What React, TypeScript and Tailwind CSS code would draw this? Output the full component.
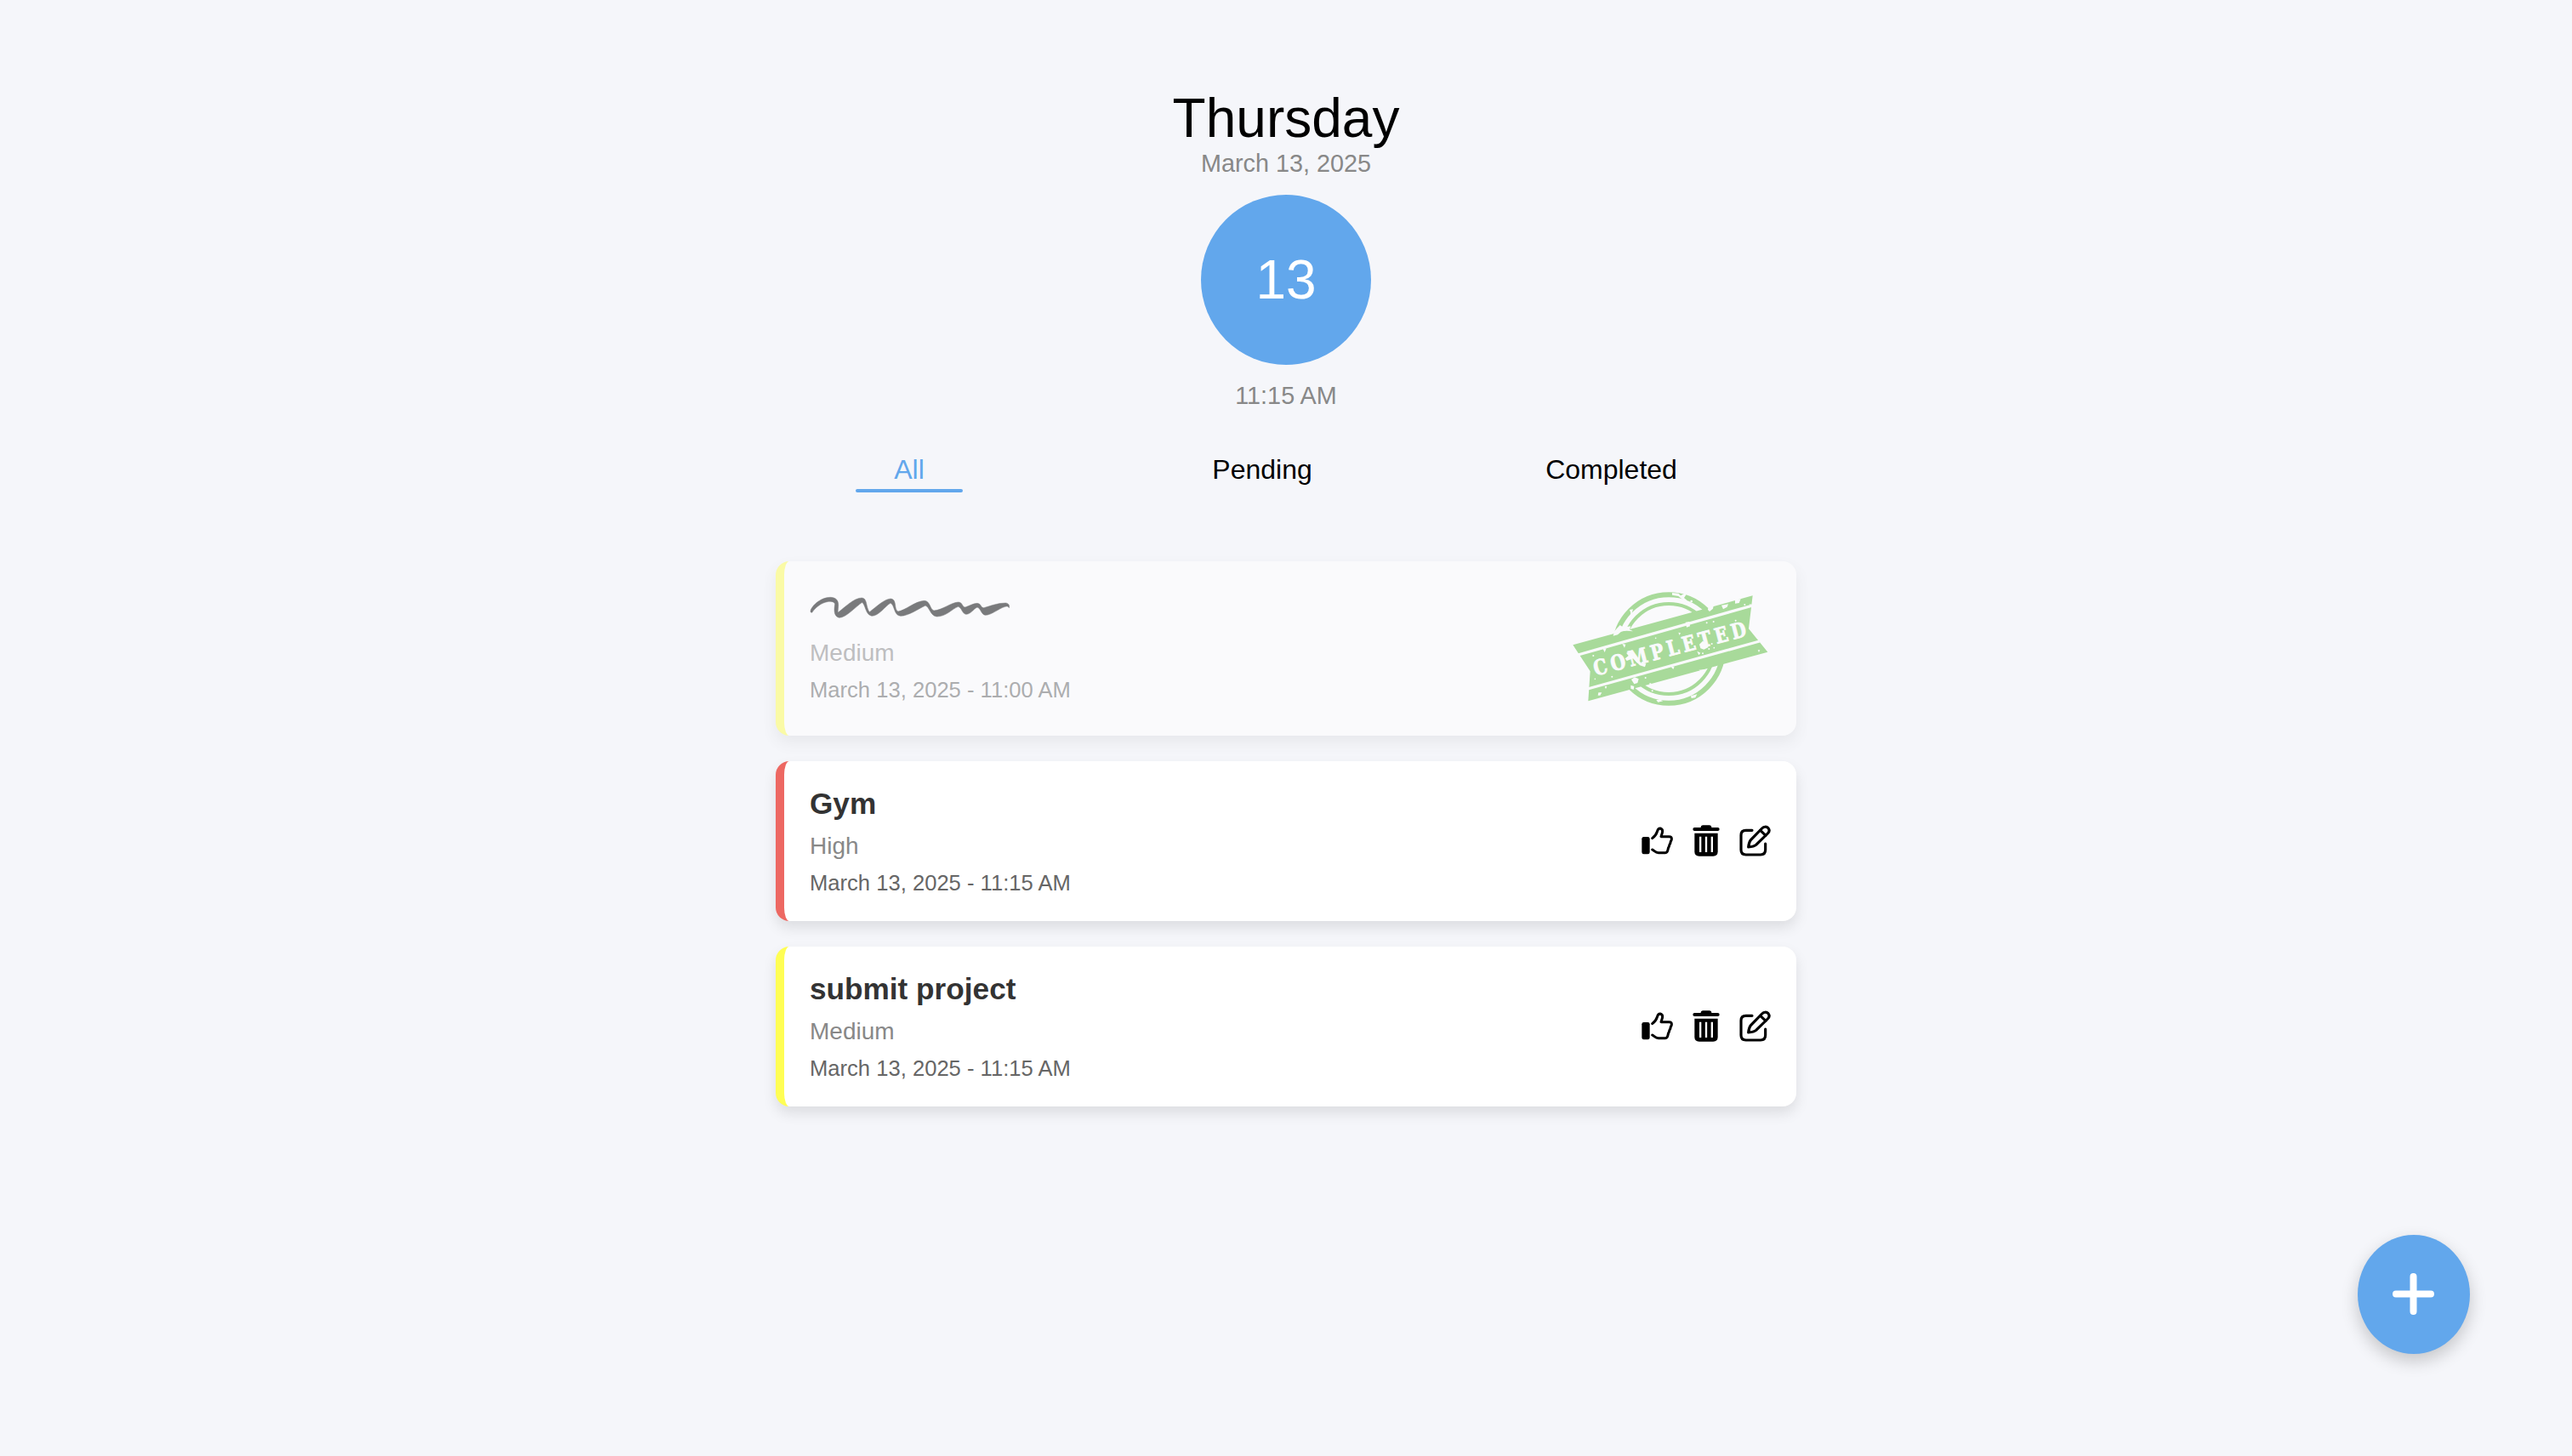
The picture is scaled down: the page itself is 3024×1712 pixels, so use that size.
import type { ReactNode } from "react";

function Scribble() {
  return (
    <svg className="block h-[26px] w-[236px]" viewBox="159 152 708 78" fill="#000" stroke="#000" strokeWidth="1.5" strokeLinejoin="round">
      <path d="M162 208C160 192 195 156 232 156C252 156 261 168 260 186L258 210C285 190 315 158 343 158C363 159 356 190 370 208C395 188 425 161 445 161C468 163 455 200 471 206C495 203 530 170 563 168C585 169 582 198 597 203C630 200 655 175 683 173C700 174 695 190 708 191C722 186 738 177 750 177C766 179 760 192 773 193C800 186 820 176 850 176C860 177 865 184 862 193C859 187 855 187 848 189C825 196 800 219 778 219C763 216 763 195 750 191C735 198 727 216 710 216C695 212 696 192 682 189C660 198 640 224 607 224C583 220 582 190 567 185C540 198 508 221 480 222C455 220 460 185 444 176C425 188 402 222 378 222C355 216 357 185 344 174C320 190 287 228 263 228C241 222 246 195 248 179C243 168 225 169 207 176C185 186 174 200 167 210Z" />
    </svg>
  );
}

function CompletedStamp() {
  return (
    <svg className="block h-[136px] w-[232px]" viewBox="54 72 696 408" fontFamily="'DejaVu Serif', serif">
      <g fill="none" stroke="#5dc03c">
        <circle cx="396" cy="276" r="191" strokeWidth="18" />
        <circle cx="396" cy="276" r="159" strokeWidth="12" />
      </g>
      <path d="M58 262L692 88L678 205L745 287L112 460L119 355Z" fill="#5dc03c" />
      <g stroke="#fff" strokeWidth="10" fill="none">
        <path d="M76 297L692 123" />
        <path d="M110 417L716 249" />
      </g>
      <text
        transform="translate(138 371) rotate(-14.8) scale(0.82 1)"
        fontSize="74"
        fontWeight="700"
        fill="#fff"
        stroke="#fff"
        strokeWidth="2.5"
        textLength="676"
        lengthAdjust="spacing"
      >
        COMPLETED
      </text>
      <g fill="#fff">
        <path d="M408 78l22 2 8 8 14-8 6 4-8 12 10 8-4 4-14-8-12-10-22-4zM536 122l18 2-2 10-12 10-6-6zM582 122l24-4-4 10-14 8zM630 102l20-2-6 14-14 2zM258 138l12-2-4 14 8 8-16 4 4-12zM204 214l20-22 12 8 4-18 8 16 14-2-4 12 12 6-22-2-18 2-14 12-16 4zM455 182l14-2 2 16-12 4zM232 258l12 2-4 12zM164 276l12-2-6 14zM430 218l8 2-4 8z" />
        <path d="M246 290l14-2 20 20 20 18 16 2-4 12-18-6-24-24-22 8-6-8 12-10zM504 260l12-12 12 8 8 14-16 8-12-4zM496 284l12 6-6 8zM264 384l12-8 14 6-4 14-12 4zM404 340l12-2-4 10zM326 398l8-2-2 8zM148 430l12 0-6 10-8 0zM170 408l8 0-4 10zM502 350l26-2-8 14-8-6zM474 442l22-6-6 12-14 2zM352 456l10 0-2-10 8 10 8 4-18 4zM680 118l12 2-4 10zM710 280l8 0-4 8zM262 404l12 4-2 12-10-4z" />
        <circle cx="548" cy="258" r="3" />
        <circle cx="538" cy="276" r="3" />
        <circle cx="556" cy="272" r="2.5" />
        <circle cx="516" cy="292" r="3" />
        <circle cx="530" cy="184" r="3" />
        <circle cx="554" cy="180" r="3" />
        <circle cx="632" cy="176" r="3" />
        <circle cx="664" cy="120" r="3" />
        <circle cx="136" cy="382" r="2.5" />
        <circle cx="196" cy="374" r="3" />
        <circle cx="314" cy="378" r="3" />
        <circle cx="338" cy="424" r="3" />
        <circle cx="476" cy="108" r="4" />
        <circle cx="290" cy="136" r="3" />
        <circle cx="130" cy="300" r="3" />
        <circle cx="350" cy="238" r="2.5" />
      </g>
    </svg>
  );
}

function ThumbIcon() {
  return (
    <svg className="block h-[37px] w-[37px]" viewBox="90 90 111 111" fill="none" stroke="#000" strokeWidth="9" strokeLinecap="round" strokeLinejoin="round">
      <rect x="91" y="132" width="28" height="61" rx="7" fill="#000" stroke="none" />
      <path d="M128 137C137 130 142 124 145 114C147 105 150 102 156 102C163 104 165 111 163 118L159 131H187C194 131 197 135 196 141C195 147 192 148 192 152C192 156 189 158 188 162C188 167 185 168 184 173C183 179 182 188 174 188H150C140 188 136 182 128 177" />
    </svg>
  );
}

function TrashIcon() {
  return (
    <svg className="block h-[37px] w-[32px]" viewBox="271 90 96 111" fill="#000">
      <path d="M278 99H300Q300 91 308 91H330Q338 91 338 99H360Q366 99 366 105Q366 111 360 111H278Q272 111 272 105Q272 99 278 99Z" />
      <path d="M278 119H360V184Q360 200 344 200H294Q278 200 278 184Z" />
      <path d="M298.500 131V186M319 131V186M339.500 131V186" stroke="#fff" strokeWidth="7" />
    </svg>
  );
}

function EditIcon() {
  return (
    <svg className="block h-[37px] w-[37px]" viewBox="437 90 111 111" fill="none" stroke="#000" strokeWidth="9.5" strokeLinecap="round" strokeLinejoin="round">
      <path d="M482 109H460Q443 109 443 126V178Q443 195 460 195H512Q529 195 529 178V156" />
      <path d="M469 168C470 158 472 149 478 142L517 102C524 95 533 95 539 101C544 107 543 114 537 120L496 160C489 166 479 167 469 168Z" />
      <path d="M511 109L530 127" />
    </svg>
  );
}

function Card({ title, priority, date, done, border }: {
  title: ReactNode; priority: string; date: string; done?: boolean; border: string;
}) {
  return (
    <article
      className={`flex items-center justify-between rounded-2xl border-l-[10px] bg-white pl-[30px] shadow-[0_8px_16px_rgba(0,0,0,0.1)] ${border} ${done ? "h-[205px] pr-8 opacity-50" : "h-[188px] pr-[30px]"}`}
    >
      <div className="self-start pt-[30px]">
        {title}
        <p className="mt-[14px] text-[28px] leading-8 text-[#888]">{priority}</p>
        <p className="mt-[13px] text-[25.6px] leading-7 text-[#666]">{date}</p>
      </div>
      {done ? (
        <CompletedStamp />
      ) : (
        <div className="flex items-center gap-[23px] pb-0.5">
          <button aria-label="Complete"><ThumbIcon /></button>
          <button aria-label="Delete"><TrashIcon /></button>
          <button aria-label="Edit"><EditIcon /></button>
        </div>
      )}
    </article>
  );
}

export default function App() {
  return (
    <div className="flex h-[1712px] w-full flex-col items-center bg-[#f5f6fa] font-['Liberation_Sans',Arial,sans-serif] text-black">
      <header className="flex flex-col items-center pt-[102px]">
        <h1 className="text-[64px] leading-[74px]">Thursday</h1>
        <p className="text-[28.8px] leading-8 text-[#888]">March 13, 2025</p>
        <div className="mt-[21px] flex h-[200px] w-[200px] items-center justify-center rounded-full bg-[#62a7ec] text-[64px] leading-[74px] text-white">
          13
        </div>
        <p className="mt-5 text-[28.8px] leading-8 text-[#888]">11:15 AM</p>
      </header>

      <nav className="mt-[53px] flex h-[45px] w-[1200px] items-start pl-[94px] text-[32px] leading-9">
        <button className="w-[126px] text-[#62a7ec]">
          <span className="flex h-[41px] items-start justify-center">All</span>
          <span className="block h-1 rounded-sm bg-[#62a7ec]" />
        </button>
        <button className="ml-[248px] w-[208px]">Pending</button>
        <button className="ml-[184px] w-[245px]">Completed</button>
      </nav>

      <main className="mt-[81px] flex w-[1200px] flex-col gap-[30px]">
        <Card
          title={<div className="h-12 pt-[11px]"><Scribble /></div>}
          priority="Medium"
          date="March 13, 2025 - 11:00 AM"
          border="border-[#fffe54]"
          done
        />
        <Card
          title={<h2 className="text-[35.2px] leading-10 font-bold text-[#333]">Gym</h2>}
          priority="High"
          date="March 13, 2025 - 11:15 AM"
          border="border-[#ed6862]"
        />
        <Card
          title={<h2 className="text-[35.2px] leading-10 font-bold text-[#333]">submit project</h2>}
          priority="Medium"
          date="March 13, 2025 - 11:15 AM"
          border="border-[#fffe54]"
        />
      </main>

      <button
        aria-label="Add task"
        className="fixed right-[120px] bottom-[120px] flex h-[140px] w-[132px] items-center justify-center rounded-[50%] bg-[#62a7ec] pr-px pb-px shadow-[0_8px_20px_rgba(0,0,0,0.2)]"
      >
        <svg className="h-[49px] w-[49px]" viewBox="0 0 49 49" fill="none" stroke="#fff" strokeWidth="8" strokeLinecap="round">
          <path d="M24.500 4V45M4 24.500H45" />
        </svg>
      </button>
    </div>
  );
}
